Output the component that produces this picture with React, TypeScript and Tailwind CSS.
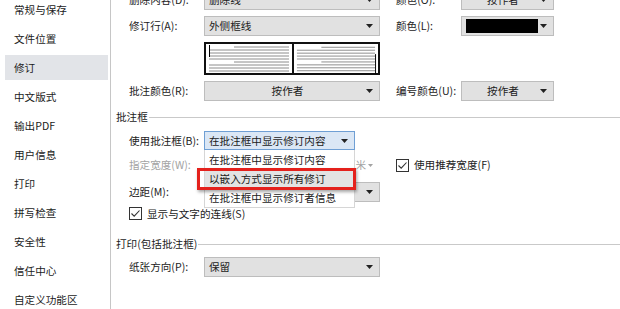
import type { ReactNode } from "react";

const navItems = [
  "常规与保存",
  "文件位置",
  "修订",
  "中文版式",
  "输出PDF",
  "用户信息",
  "打印",
  "拼写检查",
  "安全性",
  "信任中心",
  "自定义功能区",
];

const Arrow = () => (
  <svg width="7" height="4" viewBox="0 0 7 4" className="shrink-0">
    <path d="M0 0 H7 L3.5 4 Z" fill="#222" />
  </svg>
);

interface ISelectProps {
  value?: string;
  width: string;
  center?: boolean;
  children?: ReactNode;
}

const Select = ({ value, width, center, children }: ISelectProps) => (
  <div
    className={`${width} h-[20px] flex items-center bg-[#e1e1e1] border border-[#bdbdbd] pl-[4px] pr-[6px] whitespace-nowrap`}
  >
    <div className={`flex-1 ${center ? "text-center" : ""}`}>
      {children ?? value}
    </div>
    <Arrow />
  </div>
);

const CheckBox = () => (
  <svg width="13" height="13" viewBox="0 0 13 13" className="shrink-0">
    <rect x="0.5" y="0.5" width="12" height="12" fill="#fff" stroke="#333" />
    <path d="M2.5 6.5 L5.2 9.2 L10.5 3.5" fill="none" stroke="#333" strokeWidth="1.1" />
  </svg>
);

// the little paragraph preview, drawn as gray lines
const Preview = ({ bar }: { bar: "left" | "right" }) => {
  const ys = [3, 6, 9, 12, 15, 18, 21, 24, 27];
  return (
    <svg width="86" height="31" viewBox="0 0 86 31" className="block">
      {ys.map((y, i) => (
        <line
          key={y}
          x1={i === 0 || i === 5 ? 28 : 3}
          x2={83}
          y1={y}
          y2={y}
          stroke="#8c8c8c"
          strokeWidth="1"
        />
      ))}
      {bar === "left" ? (
        <line x1="3.5" x2="3.5" y1="1" y2="13" stroke="#000" strokeWidth="1" />
      ) : (
        <line x1="83.5" x2="83.5" y1="10" y2="30" stroke="#000" strokeWidth="1" />
      )}
    </svg>
  );
};

const SectionTitle = ({ title }: { title: string }) => (
  <div className="flex items-center h-[14px] ml-[-13px] whitespace-nowrap">
    <span className="pr-[1px]">{title}</span>
    <div className="flex-1 border-t border-[#c9c9c9]" />
  </div>
);

export default function App() {
  return (
    <div
      className="w-[620px] h-[309px] overflow-hidden bg-white flex text-[10.6px] leading-[14px] text-[#1b1b1b]"
      style={{ fontFamily: '"Noto Sans CJK SC", "Microsoft YaHei", sans-serif' }}
    >
      {/* left nav */}
      <div className="w-[111px] shrink-0 border-r border-[#c6c6c6] pl-[5px] pr-[2px]">
        <div className="flex flex-col gap-[4px] mt-[-3px]">
          {navItems.map((item) => (
            <div
              key={item}
              className={`h-[25px] flex items-center pl-[9px] whitespace-nowrap ${
                item === "修订" ? "bg-[#e2e4e8]" : ""
              }`}
            >
              {item}
            </div>
          ))}
        </div>
      </div>

      {/* content */}
      <div className="flex-1 pl-[18px] flex flex-col">
        {/* row 0, cut off at the top */}
        <div className="flex items-center mt-[-10px] h-[20px] whitespace-nowrap">
          <div className="w-[75px]">删除内容(D):</div>
          <Select width="w-[176px]" value="删除线" />
          <div className="w-[65px] ml-[16px]">颜色(O):</div>
          <Select width="w-[93px]" value="按作者" center />
        </div>

        <div className="flex items-center mt-[6px] h-[20px] whitespace-nowrap">
          <div className="w-[75px]">修订行(A):</div>
          <Select width="w-[176px]" value="外侧框线" />
          <div className="w-[65px] ml-[16px]">颜色(L):</div>
          <Select width="w-[93px]">
            <div className="h-[14px] w-[72px] bg-black" />
          </Select>
        </div>

        <div className="flex mt-[6px] ml-[75px] h-[33px] w-[176px] border-2 border-[#111]">
          <div className="border-r-2 border-[#111]">
            <Preview bar="left" />
          </div>
          <Preview bar="right" />
        </div>

        <div className="flex items-center mt-[6px] h-[20px] whitespace-nowrap">
          <div className="w-[75px]">批注颜色(R):</div>
          <Select width="w-[176px]" value="按作者" center />
          <div className="w-[65px] ml-[16px]">编号颜色(U):</div>
          <Select width="w-[93px]" value="按作者" center />
        </div>

        <div className="mt-[9px]">
          <SectionTitle title="批注框" />
        </div>

        <div className="relative flex items-center mt-[7px] h-[19px] whitespace-nowrap">
          <div className="w-[75px]">使用批注框(B):</div>
          <div className="w-[151px] h-[19px] flex items-center bg-[#dbe7f5] border border-[#6f9fd4] pl-[4px] pr-[6px]">
            <div className="flex-1">在批注框中显示修订内容</div>
            <Arrow />
          </div>

          {/* open dropdown list */}
          <div className="absolute left-[75px] top-[19px] w-[151px] z-10 bg-white border border-[#d6d6d6] border-t-0 flex flex-col">
            <div className="h-[19px] flex items-center pl-[4px]">在批注框中显示修订内容</div>
            <div className="h-[19px] flex items-center pl-[4px] bg-[#e3e3e3]">以嵌入方式显示所有修订</div>
            <div className="h-[19px] flex items-center pl-[4px]">在批注框中显示修订者信息</div>
          </div>
          <div className="absolute left-[68px] top-[37px] w-[159px] h-[22px] z-20 border-[3px] border-[#e4211c] shadow-[1px_2px_3px_rgba(0,0,0,0.35)]" />
        </div>

        <div className="flex items-center mt-[7px] h-[16px] text-[#a3a3a3] whitespace-nowrap">
          <div className="w-[75px]">指定宽度(W):</div>
          <div className="w-[141px]" />
          <div className="flex items-center gap-[2px] w-[35px]">
            <span>厘米</span>
            <svg width="5" height="3" viewBox="0 0 5 3" className="shrink-0">
              <path d="M0 0 H5 L2.5 3 Z" fill="#a3a3a3" />
            </svg>
          </div>
          <div className="flex items-center gap-[5px] ml-[16px] text-[#1b1b1b]">
            <CheckBox />
            <span>使用推荐宽度(F)</span>
          </div>
        </div>

        <div className="flex items-center mt-[9px] h-[19px] whitespace-nowrap">
          <div className="w-[75px]">边距(M):</div>
          <Select width="w-[176px]" value="" />
        </div>

        <div className="flex items-center gap-[5px] mt-[5px] h-[15px] whitespace-nowrap">
          <CheckBox />
          <span>显示与文字的连线(S)</span>
        </div>

        <div className="mt-[16px]">
          <SectionTitle title="打印(包括批注框)" />
        </div>

        <div className="flex items-center mt-[6px] h-[20px] whitespace-nowrap">
          <div className="w-[75px]">纸张方向(P):</div>
          <Select width="w-[176px]" value="保留" />
        </div>
      </div>
    </div>
  );
}
